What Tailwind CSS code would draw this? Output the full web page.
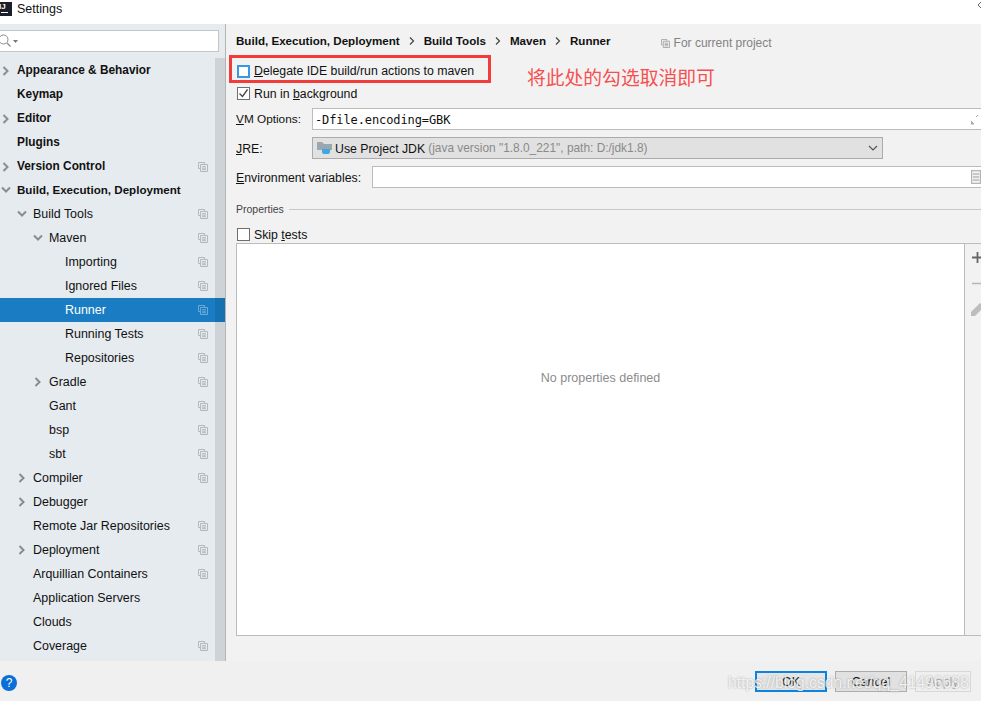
<!DOCTYPE html>
<html><head><meta charset="utf-8"><script src="https://cdn.jsdelivr.net/npm/@tailwindcss/browser@4"></script></head>
<body class="m-0">
<svg width="0" height="0" class="absolute"><defs>
<symbol id="cp" viewBox="0 0 10 10"><path d="M.5.5h6v1.5M.5.5v6H2M2.5 2.500h7v7h-7zM4 4.700h4M4 6.200h4M4 7.700h4" fill="none" stroke="currentColor" stroke-width="1"/></symbol>
<symbol id="cr" viewBox="0 0 8 10"><path d="M1.500 1l4 4-4 4" fill="none" stroke="#8c8c8c" stroke-width="2"/></symbol>
<symbol id="cd" viewBox="0 0 10 8"><path d="M1 1.500l4 4 4-4" fill="none" stroke="#8c8c8c" stroke-width="2"/></symbol>
</defs></svg>
<div class="relative w-[981px] h-[701px] overflow-hidden bg-[#f0f0f0] text-[12px] text-[#111] font-['Liberation_Sans',Arial,sans-serif]">
  <header class="h-6 bg-white flex items-start">
    <div class="w-[12px] h-[14px] mt-[2px] bg-[#1c1f2b] text-white text-[8px] font-bold leading-[9px] pl-[1px] overflow-hidden flex flex-col"><span class="-ml-[2px]">IJ</span><span class="w-[7px] h-px bg-white mt-[1px]"></span></div>
    <span class="ml-[5px] mt-[1px] leading-[16px] text-[12.5px]">Settings</span>
    <svg width="3" height="6" viewBox="0 0 3 6" class="ml-auto mt-[2px]"><path d="M3 0L0 3l3 3" fill="none" stroke="#666"/></svg>
  </header>
  <div class="flex h-[637px]">
    <aside class="relative w-[226px] shrink-0 bg-[#e6ebf0] border-r border-[#b4b4b4]">
      <div class="h-[34px] pt-[6px]">
        <div class="w-[219px] h-[22px] bg-white border border-[#c4c4c4] border-l-0 flex items-center gap-px">
          <svg width="14" height="14" viewBox="0 0 14 14" class="-ml-[2px]"><circle cx="5.500" cy="5.500" r="4.500" fill="none" stroke="#8a8a8a"/><path d="M9 9l3.500 3.500" stroke="#8a8a8a" stroke-width="1.300"/></svg>
          <svg width="5" height="3" viewBox="0 0 5 3"><path d="M0 0h5L2.500 3z" fill="#777"/></svg>
        </div>
      </div>
      <div class="text-[12.45px] [&>div]:h-6 [&>div]:flex [&>div]:items-center [&_svg.i]:w-[10px] [&_svg.i]:h-[10px] [&_svg.i]:ml-auto [&_svg.i]:mr-[17px] [&_svg.i]:text-[#b4b9be]">
        <div class="pl-[1px] pt-[2px] font-bold text-[11.85px]"><span class="w-4 flex"><svg width="8" height="10" class="ml-[1px]"><use href="#cr"/></svg></span>Appearance &amp; Behavior</div>
        <div class="pl-[17px] pt-[2px] font-bold text-[11.85px]">Keymap</div>
        <div class="pl-[1px] pt-[2px] font-bold text-[11.85px]"><span class="w-4 flex"><svg width="8" height="10" class="ml-[1px]"><use href="#cr"/></svg></span>Editor</div>
        <div class="pl-[17px] pt-[2px] font-bold text-[11.85px]">Plugins</div>
        <div class="pl-[1px] pt-[2px] font-bold text-[11.85px]"><span class="w-4 flex"><svg width="8" height="10" class="ml-[1px]"><use href="#cr"/></svg></span>Version Control<svg class="i"><use href="#cp"/></svg></div>
        <div class="pl-[1px] font-bold text-[11.6px]"><span class="w-4 flex"><svg width="10" height="8"><use href="#cd"/></svg></span>Build, Execution, Deployment</div>
        <div class="pl-[17px]"><span class="w-4 flex"><svg width="10" height="8"><use href="#cd"/></svg></span>Build Tools<svg class="i"><use href="#cp"/></svg></div>
        <div class="pl-[33px]"><span class="w-4 flex"><svg width="10" height="8"><use href="#cd"/></svg></span>Maven<svg class="i"><use href="#cp"/></svg></div>
        <div class="pl-[65px]">Importing<svg class="i"><use href="#cp"/></svg></div>
        <div class="pl-[65px]">Ignored Files<svg class="i"><use href="#cp"/></svg></div>
        <div class="pl-[65px] bg-[#1a7dc4] text-white [&>svg.i]:text-[#6aa9d8]">Runner<svg class="i"><use href="#cp"/></svg></div>
        <div class="pl-[65px]">Running Tests<svg class="i"><use href="#cp"/></svg></div>
        <div class="pl-[65px]">Repositories<svg class="i"><use href="#cp"/></svg></div>
        <div class="pl-[33px]"><span class="w-4 flex"><svg width="8" height="10" class="ml-px"><use href="#cr"/></svg></span>Gradle<svg class="i"><use href="#cp"/></svg></div>
        <div class="pl-[49px]">Gant<svg class="i"><use href="#cp"/></svg></div>
        <div class="pl-[49px]">bsp<svg class="i"><use href="#cp"/></svg></div>
        <div class="pl-[49px]">sbt<svg class="i"><use href="#cp"/></svg></div>
        <div class="pl-[17px]"><span class="w-4 flex"><svg width="8" height="10" class="ml-px"><use href="#cr"/></svg></span>Compiler<svg class="i"><use href="#cp"/></svg></div>
        <div class="pl-[17px]"><span class="w-4 flex"><svg width="8" height="10" class="ml-px"><use href="#cr"/></svg></span>Debugger</div>
        <div class="pl-[33px]">Remote Jar Repositories<svg class="i"><use href="#cp"/></svg></div>
        <div class="pl-[17px]"><span class="w-4 flex"><svg width="8" height="10" class="ml-px"><use href="#cr"/></svg></span>Deployment<svg class="i"><use href="#cp"/></svg></div>
        <div class="pl-[33px]">Arquillian Containers<svg class="i"><use href="#cp"/></svg></div>
        <div class="pl-[33px]">Application Servers</div>
        <div class="pl-[33px]">Clouds</div>
        <div class="pl-[33px]">Coverage<svg class="i"><use href="#cp"/></svg></div>
      </div>
      <div class="absolute right-0 top-[34px] bottom-0 w-[10px] bg-black/10"></div>
    </aside>
    <main class="flex-1 min-w-0 bg-[#f2f2f2] overflow-hidden">
      <div class="h-[31px] flex items-start pt-[9px] pl-[10px] font-bold leading-[16px] text-[11.6px]">
        <span>Build, Execution, Deployment</span>
        <svg width="6" height="8" viewBox="0 0 6 8" class="mx-[9px] mt-[4px]"><path d="M1 .5l3.500 3.500L1 7.500" fill="none" stroke="#444" stroke-width="1.200"/></svg>
        <span>Build Tools</span>
        <svg width="6" height="8" viewBox="0 0 6 8" class="mx-[9px] mt-[4px]"><path d="M1 .5l3.500 3.500L1 7.500" fill="none" stroke="#444" stroke-width="1.200"/></svg>
        <span>Maven</span>
        <svg width="6" height="8" viewBox="0 0 6 8" class="mx-[9px] mt-[4px]"><path d="M1 .5l3.500 3.500L1 7.500" fill="none" stroke="#444" stroke-width="1.200"/></svg>
        <span>Runner</span>
        <span class="ml-[50px] mt-[2px] flex items-center gap-[4px] font-normal text-[12px] text-[#828282]"><svg width="9" height="9" class="text-[#a5a5a5]"><use href="#cp"/></svg>For current project</span>
      </div>
      <div class="flex items-center">
        <div class="ml-[3px] w-[262px] h-[28px] border-[3px] border-[#f23b3b] flex items-center pl-[5px] pt-[4px] gap-[4px] text-[12.3px]">
          <span class="w-[13px] h-[13px] bg-white border-2 border-[#3b96e6] shrink-0"></span><span><u>D</u>elegate IDE build/run actions to maven</span>
        </div>
        <span class="ml-[36px] relative top-[8px] text-[18.8px] text-[#f55050] font-['Noto_Sans_CJK_SC',sans-serif] leading-[28px]">将此处的勾选取消即可</span>
      </div>
      <div class="h-[19px] mt-[1px] flex items-center pl-[11px] gap-[4px] text-[12.3px]">
        <span class="w-[13px] h-[13px] bg-white border border-[#6e6e6e] shrink-0 flex items-center justify-center"><svg width="9" height="9" viewBox="0 0 9 9"><path d="M.5 4.500l3 3 5-7" fill="none" stroke="#444" stroke-width="1.300"/></svg></span><span class="pt-[2px]">Run in <u>b</u>ackground</span>
      </div>
      <div class="flex items-center h-[22px] mt-[5px] pl-[10px]">
        <span class="w-[76px] pt-[2px] text-[11.8px]"><u>V</u>M Options:</span>
        <div class="flex-1 h-full bg-white border-y border-l border-[#bcbcbc] flex items-center pl-[2px] pr-[1px] text-[12px] font-['DejaVu_Sans_Mono',monospace] tracking-[-0.1px]"><span class="pt-[2px]">-Dfile.encoding=GBK</span>
          <svg width="9" height="11" viewBox="0 0 9 11" class="ml-auto"><path d="M0 10h3l-3-3zM5 3l2-2" stroke="#aab" fill="#aab" stroke-width="1"/></svg>
        </div>
      </div>
      <div class="flex items-center h-[22px] mt-[7px] pl-[10px]">
        <span class="w-[76px] pt-[2px] text-[12.3px]"><u>J</u>RE:</span>
        <div class="w-[571px] h-full bg-[#e1e1e1] border border-[#ababab] flex items-center pl-[4px] pr-[3px] text-[12.3px]">
          <svg width="16" height="14" viewBox="0 0 16 14" class="mr-[2px]"><path d="M0 1h5l2 2h8v6H0z" fill="#9aa7b0"/><path d="M5 8h8v3a2 2 0 0 1-2 2H7a2 2 0 0 1-2-2z" fill="#40a8de"/></svg>
          <span class="pt-[2px]">Use Project JDK</span><span class="ml-[3px] pt-[2px] text-[#8a8a8a] text-[11.9px]">(java version "1.8.0_221", path: D:/jdk1.8)</span>
          <svg width="10" height="7" viewBox="0 0 10 7" class="ml-auto mr-[1px]"><path d="M1 1l4 4 4-4" fill="none" stroke="#555" stroke-width="1.200"/></svg>
        </div>
      </div>
      <div class="flex items-center h-[22px] mt-[7px] pl-[10px]">
        <span class="w-[136px] pt-[2px] text-[12.3px]"><u>E</u>nvironment variables:</span>
        <div class="flex-1 h-full bg-white border-y border-l border-[#bcbcbc] flex items-center justify-end">
          <svg width="10" height="14" viewBox="0 0 10 14"><path d="M.5.500h9v13h-9z" fill="#f4f4f4" stroke="#b5b5b5" stroke-width="1.500"/><path d="M2 4h6M2 7h6M2 10h6" stroke="#9a9a9a"/></svg>
        </div>
      </div>
      <div class="flex items-center h-[16px] mt-[13px] pl-[10px] gap-[5px] text-[10.5px] text-[#444]"><span class="pt-[2px]">Properties</span><span class="flex-1 h-px bg-[#c8c8c8]"></span></div>
      <div class="h-[19px] mt-[8px] flex items-center pl-[11px] gap-[4px] text-[12.3px]">
        <span class="w-[13px] h-[13px] bg-white border border-[#6e6e6e] shrink-0"></span><span class="pt-[2px]">Skip <u>t</u>ests</span>
      </div>
      <div class="ml-[10px] h-[393px] -mt-px border-y border-l border-[#bcbcbc] flex">
        <div class="w-[728px] bg-white border-r border-[#bcbcbc] flex items-start justify-center text-[#8c8c8c] text-[12.5px] pt-[125px]">No properties defined</div>
        <div class="flex-1 flex flex-col items-start pl-[7px] pt-[8px] overflow-hidden">
          <svg width="12" height="11" viewBox="0 0 12 11" class="shrink-0"><path d="M5.500 0v11M0 5.500h11" stroke="#666" stroke-width="1.800"/></svg>
          <svg width="12" height="3" viewBox="0 0 12 3" class="shrink-0 mt-[19px]"><path d="M0 1.500h12" stroke="#b5b5b5" stroke-width="1.500"/></svg>
          <svg width="14" height="14" viewBox="0 0 14 14" class="shrink-0 mt-[17px] -ml-[1px]"><path d="M0 14V10L9 1l4 4-9 9z" fill="#bdbdbd"/></svg>
        </div>
      </div>
    </main>
  </div>
  <footer class="h-10 flex items-start relative">
    <span class="ml-[1px] mt-[14px] w-4 h-4 rounded-full bg-[#0a6fd6] text-white text-[12px] leading-4 text-center">?</span>
    <div class="ml-auto mt-[10px] mr-[10px] flex gap-[8px]">
      <button class="w-[72px] h-[21px] border-2 border-[#0a84e0] bg-[#e5e5e5] text-[#111] text-[12.3px] leading-[16px]">OK</button>
      <button class="w-[72px] h-[21px] border border-[#adadad] bg-[#e1e1e1] text-[#111] text-[12.3px] leading-[18px]">Cancel</button>
      <button class="w-[56px] h-[21px] border border-[#d8d8d8] bg-[#efefef] text-[#b0b0b0] text-[12.3px] leading-[18px]">Apply</button>
    </div>
  </footer>
  <span class="absolute left-[728px] top-[674px] text-[15.7px] leading-[18px] text-white/80 [text-shadow:0_0_2px_rgba(90,90,90,.55)] whitespace-nowrap">https://blog.csdn.net/qq_41496688</span>
</div>
</body></html>
